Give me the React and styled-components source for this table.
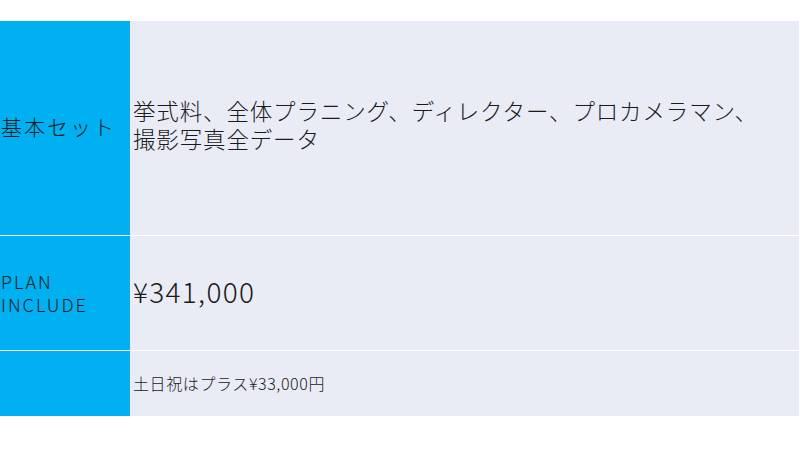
import React from 'react';
import styled, { createGlobalStyle } from 'styled-components';

const GlobalStyle = createGlobalStyle`
  body {
    margin: 0;
    background: #ffffff;
    font-family: "Noto Sans CJK JP", "Noto Sans", sans-serif;
    color: #1a1a1a;
  }
`;

const Page = styled.div`
  width: 800px;
  height: 450px;
  padding-top: 21px;
  box-sizing: border-box;
`;

const Table = styled.div`
  width: 799px;
  display: flex;
  flex-direction: column;
`;

const Row = styled.div`
  display: grid;
  grid-template-columns: 130px 1fr;
  height: ${(p) => p.$height}px;
  border-top: ${(p) => (p.$first ? 'none' : '1px solid rgba(255,255,255,0.55)')};
`;

const Head = styled.div`
  background: #00b0f0;
  display: flex;
  align-items: center;
  padding-left: 1px;
  padding-bottom: ${(p) => p.$lift || 0}px;
  font-size: ${(p) => p.$size || 21}px;
  line-height: ${(p) => p.$lh || 1.3};
  font-weight: 300;
  letter-spacing: ${(p) => p.$ls || 0}px;
  white-space: nowrap;
`;

const Cell = styled.div`
  background: #e9ebf5;
  display: flex;
  align-items: center;
  padding-left: 3px;
  padding-bottom: ${(p) => p.$lift || 0}px;
  font-size: ${(p) => p.$size}px;
  line-height: ${(p) => p.$lh || 1.3};
  font-weight: 300;
  letter-spacing: ${(p) => p.$ls || 0}px;
  white-space: nowrap;
`;

const Lines = styled.div`
  display: flex;
  flex-direction: column;
  gap: ${(p) => p.$gap || 0}px;
`;

const App = () => {
  return (
    <Page>
      <GlobalStyle />
      <Table>
        <Row $first $height={214}>
          <Head $size={21} $ls={2} $lift={2}>基本セット</Head>
          <Cell $size={22.5} $lh={1.15} $ls={0.85} $lift={6}>
            <Lines $gap={2}>
              <span>挙式料、全体プラニング、ディレクター、プロカメラマン、</span>
              <span>撮影写真全データ</span>
            </Lines>
          </Cell>
        </Row>
        <Row $height={114}>
          <Head $size={18} $lh={1.15} $ls={2}>
            <Lines $gap={2}>
              <span>PLAN</span>
              <span>INCLUDE</span>
            </Lines>
          </Head>
          <Cell $size={28} $ls={1.3} $lift={4}>¥341,000</Cell>
        </Row>
        <Row $height={65}>
          <Head />
          <Cell $size={16} $ls={0.6}>土日祝はプラス¥33,000円</Cell>
        </Row>
      </Table>
    </Page>
  );
};

export default App;
